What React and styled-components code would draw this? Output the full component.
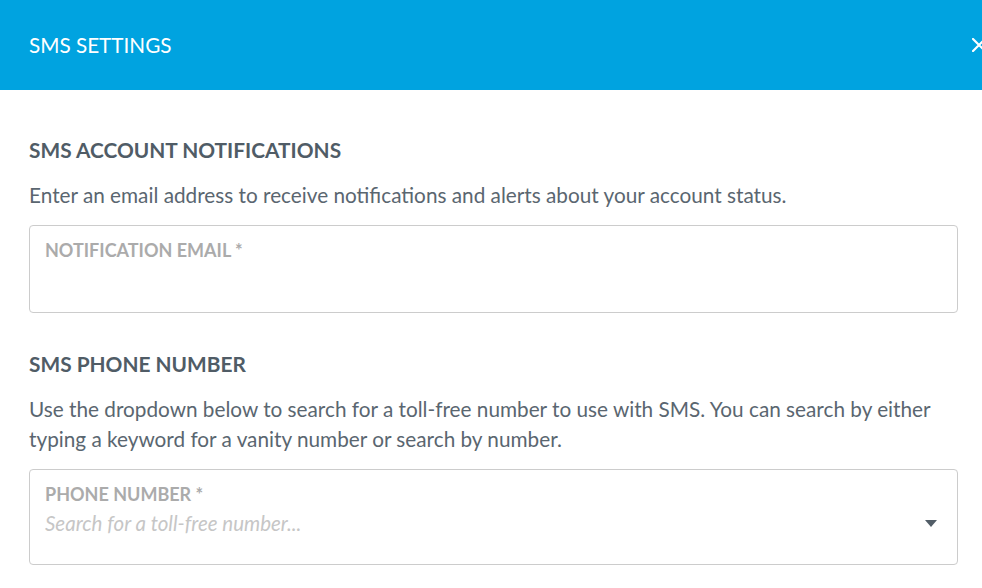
import styled, { createGlobalStyle } from "styled-components"

const GlobalStyle = createGlobalStyle`
    html, body {
        margin: 0;
        padding: 0;
        background: #ffffff;
        overflow: hidden;
    }
    body {
        font-family: Lato, "Open Sans", sans-serif;
    }
`

export default function App() {
    return (
        <>
            <GlobalStyle />
            <Modal>
                <Header>
                    <Title>SMS SETTINGS</Title>
                    <CloseButton aria-label="Close">
                        <svg width="14" height="14" viewBox="0 0 14 14">
                            <path
                                d="M1 1 L13 13 M13 1 L1 13"
                                stroke="#ffffff"
                                strokeWidth="2.2"
                                strokeLinecap="square"
                            />
                        </svg>
                    </CloseButton>
                </Header>
                <Content>
                    <Section>
                        <SectionTitle>SMS ACCOUNT NOTIFICATIONS</SectionTitle>
                        <Text>
                            Enter an email address to receive notifications and
                            alerts about your account status.
                        </Text>
                        <Field $height={88}>
                            <Label htmlFor="email">NOTIFICATION EMAIL *</Label>
                            <Input id="email" type="email" />
                        </Field>
                    </Section>
                    <Section>
                        <SectionTitle>SMS PHONE NUMBER</SectionTitle>
                        <Text>
                            Use the dropdown below to search for a toll-free
                            number to use with SMS. You can search by either
                            typing a keyword for a vanity number or search by
                            number.
                        </Text>
                        <Field $height={96}>
                            <Label htmlFor="phone">PHONE NUMBER *</Label>
                            <SelectRow>
                                <SearchInput
                                    id="phone"
                                    placeholder="Search for a toll-free number..."
                                />
                                <svg width="12" height="7" viewBox="0 0 12 7">
                                    <path d="M0 0 H12 L6 7 Z" fill="#525d67" />
                                </svg>
                            </SelectRow>
                        </Field>
                    </Section>
                </Content>
            </Modal>
        </>
    )
}

// style CSS

const Modal = styled.div`
    width: 987px;
    background: #ffffff;
`

const Header = styled.header`
    height: 90px;
    background-color: #00a3e0;
    display: flex;
    align-items: center;
    justify-content: space-between;
    padding: 0 1px 0 29px;
    box-sizing: border-box;
`

const Title = styled.h2`
    margin: 0;
    color: #ffffff;
    font-size: 20.7px;
    font-weight: 400;
    line-height: 25px;
`

const CloseButton = styled.button`
    background: none;
    border: none;
    padding: 0;
    width: 14px;
    height: 14px;
    display: flex;
    cursor: pointer;
`

const Content = styled.div`
    padding: 47px 29px 0;
`

const Section = styled.section`
    margin-bottom: 38px;
`

const SectionTitle = styled.h3`
    margin: 0 0 18px;
    font-size: 20.85px;
    font-weight: 700;
    line-height: 25px;
    color: #505c66;
`

const Text = styled.p`
    margin: 0 0 15px;
    font-size: 20.75px;
    line-height: 30px;
    color: #5a6670;
`

const Field = styled.div`
    height: ${(p) => p.$height}px;
    box-sizing: border-box;
    border: 1px solid #cccccc;
    border-radius: 4px;
    padding: 14px 20px 0 15px;
    display: flex;
    flex-direction: column;
`

const Label = styled.label`
    font-size: 18px;
    font-weight: 700;
    line-height: 21px;
    color: #ababab;
`

const Input = styled.input`
    border: none;
    outline: none;
    padding: 0;
    margin-top: 6px;
    font-family: inherit;
    font-size: 20.5px;
    line-height: 24px;
    color: #505c66;
    background: transparent;
`

const SelectRow = styled.div`
    display: flex;
    align-items: center;
    justify-content: space-between;
    margin-top: 6px;
`

const SearchInput = styled.input`
    flex: 1;
    border: none;
    outline: none;
    padding: 0;
    font-family: inherit;
    font-size: 20.5px;
    line-height: 24px;
    height: 24px;
    color: #505c66;
    background: transparent;
    &::placeholder {
        color: #c6c6c6;
        font-style: italic;
    }
`
